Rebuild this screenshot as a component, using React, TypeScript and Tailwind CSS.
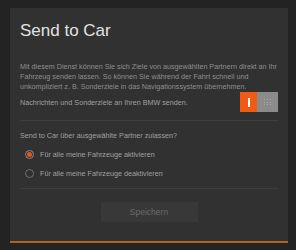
import React from 'react';

function Radio({ checked, label }: { checked?: boolean; label: string }) {
  return (
    <div className="flex h-[9px] items-center gap-[6px] pl-[5px]">
      <span
        className={`flex h-[9px] w-[9px] items-center justify-center rounded-full border ${
          checked ? 'border-[#8a8a8a]' : 'border-[#6e6e6e]'
        }`}
      >
        {checked && <span className="h-[5px] w-[5px] rounded-full bg-[#e8551a]" />}
      </span>
      <span className="text-[7.2px] leading-[9px] text-[#a0a0a0]">{label}</span>
    </div>
  );
}

export default function App() {
  return (
    <div className="h-[250px] w-[296px] bg-[#232323] pt-[8px] pl-[10px] pr-[8px] font-['Liberation_Sans',Arial,sans-serif]">
      <div className="flex h-[235px] flex-col border-b-2 border-[#b5601e] bg-[#313131] px-[10px]">
        <h1 className="mt-[13px] text-[17px] leading-[20px] text-[#e2e2e2]">Send to Car</h1>
        <p className="mt-[21px] text-[7.2px] leading-[10px] text-[#8f8f8f]">
          Mit diesem Dienst können Sie sich Ziele von ausgewählten Partnern direkt an Ihr Fahrzeug
          senden lassen. So können Sie während der Fahrt schnell und unkompliziert z. B. Sonderziele
          in das Navigationssystem übernehmen.
        </p>
        <div className="flex items-center justify-between border-b border-[#3d3d3d] pb-[8px]">
          <span className="text-[7.2px] leading-[9px] text-[#a0a0a0]">
            Nachrichten und Sonderziele an Ihren BMW senden.
          </span>
          <div className="flex h-[20px]">
            <div className="flex w-[17px] items-center justify-center bg-[#f05a14]">
              <span className="h-[9px] w-[2px] bg-white" />
            </div>
            <div className="grid w-[21px] grid-cols-3 content-center justify-center gap-[1.5px] bg-[#8b8b8b] px-[7px]">
              {Array.from({ length: 9 }).map((_, i) => (
                <span key={i} className="h-[1px] w-[1px] bg-[#a8a8a8]" />
              ))}
            </div>
          </div>
        </div>
        <p className="mt-[11px] text-[7.2px] leading-[8px] text-[#a0a0a0]">
          Send to Car über ausgewählte Partner zulassen?
        </p>
        <div className="mt-[10px] flex flex-col gap-[10px] border-b border-[#3d3d3d] pb-[10px]">
          <Radio checked label="Für alle meine Fahrzeuge aktivieren" />
          <Radio label="Für alle meine Fahrzeuge deaktivieren" />
        </div>
        <div className="mt-[13px] flex justify-center">
          <button className="h-[20px] w-[97px] bg-[#383838] text-[8.5px] text-[#6a6a6a]">
            Speichern
          </button>
        </div>
      </div>
    </div>
  );
}
